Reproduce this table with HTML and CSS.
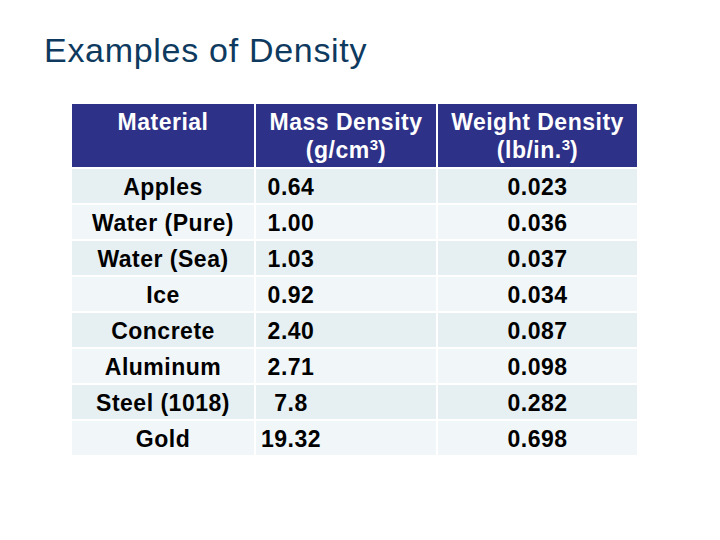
FILE: index.html
```html
<!DOCTYPE html>
<html lang="en">
<head>
<meta charset="utf-8">
<title>Examples of Density</title>
<link rel="stylesheet" href="styles.css">
</head>
<body>
<div class="slide">
  <h1 class="title">Examples of Density</h1>
  <div class="table-wrap">
    <table class="density">
      <colgroup>
        <col class="c1"><col class="c2"><col class="c3">
      </colgroup>
      <thead>
        <tr>
          <th>Material</th>
          <th>Mass Density<br>(g/cm<sup>3</sup>)</th>
          <th>Weight Density<br>(lb/in.<sup>3</sup>)</th>
        </tr>
      </thead>
      <tbody>
        <tr><td>Apples</td><td class="mass">0.64</td><td>0.023</td></tr>
        <tr><td>Water (Pure)</td><td class="mass">1.00</td><td>0.036</td></tr>
        <tr><td>Water (Sea)</td><td class="mass">1.03</td><td>0.037</td></tr>
        <tr><td>Ice</td><td class="mass">0.92</td><td>0.034</td></tr>
        <tr><td>Concrete</td><td class="mass">2.40</td><td>0.087</td></tr>
        <tr><td>Aluminum</td><td class="mass">2.71</td><td>0.098</td></tr>
        <tr><td>Steel (1018)</td><td class="mass">7.8</td><td>0.282</td></tr>
        <tr><td>Gold</td><td class="mass">19.32</td><td>0.698</td></tr>
      </tbody>
    </table>
  </div>
</div>
</body>
</html>
```
FILE: styles.css
```css
html, body {
  margin: 0;
  padding: 0;
  background: #ffffff;
}

.slide {
  width: 720px;
  height: 540px;
  padding-top: 33px;
  box-sizing: border-box;
  font-family: "Liberation Sans", Arial, sans-serif;
}

.title {
  margin: 0 0 0 44px;
  font-size: 34px;
  line-height: 34px;
  font-weight: normal;
  letter-spacing: 0.7px;
  color: #0e3a60;
}

.table-wrap {
  margin-top: 35px;
  margin-left: 70px;
}

.density {
  border-collapse: separate;
  border-spacing: 2px;
  table-layout: fixed;
  width: 569px;
  font-size: 23px;
  font-weight: bold;
  letter-spacing: 0.5px;
}

.density col.c1 { width: 182px; }
.density col.c2 { width: 180px; }
.density col.c3 { width: 199px; }

.density th {
  background: #2e3188;
  color: #ffffff;
  height: 63px;
  padding: 4px 0 0;
  box-sizing: border-box;
  vertical-align: top;
  line-height: 28px;
  font-weight: bold;
  text-align: center;
}

.density sup {
  font-size: 15px;
  line-height: 0;
  vertical-align: 8px;
  letter-spacing: 0;
}

.density td {
  height: 34px;
  padding: 2px 0 0;
  box-sizing: border-box;
  text-align: center;
  vertical-align: middle;
  line-height: 26px;
  color: #000000;
}

.density td.mass {
  padding-right: 110px;
}

.density tbody tr:nth-child(odd) td { background: #e6eff2; }
.density tbody tr:nth-child(even) td { background: #f1f6f8; }
```
